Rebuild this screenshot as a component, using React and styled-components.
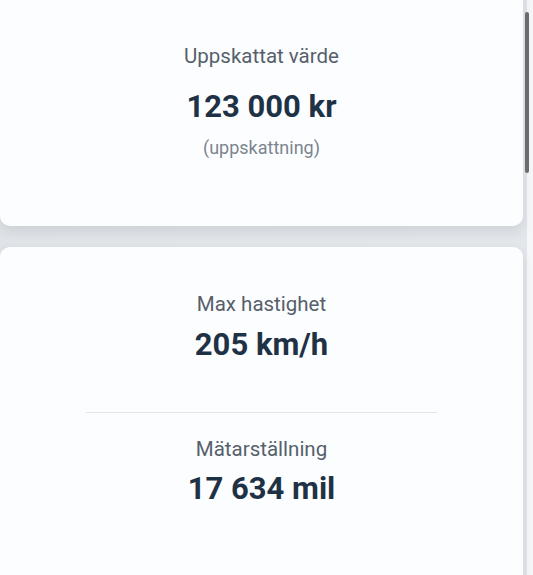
import React from "react";
import styled, { createGlobalStyle } from "styled-components";

const Global = createGlobalStyle`
  html, body { margin: 0; padding: 0; background: #f6f7f9; }
  body { font-family: Roboto, "Noto Sans", "Liberation Sans", sans-serif; overflow: hidden; }
`;

const Page = styled.div`
  position: relative;
  width: 533px;
  height: 575px;
  overflow: hidden;
  background: #f6f7f9;
`;

const Stack = styled.div`
  display: flex;
  flex-direction: column;
  gap: 21px;
  width: 527px;
  padding-right: 4px;
  box-sizing: border-box;
  margin-top: -14px;
  background: linear-gradient(to right, #e0e3e7 0%, #e3e6ea 100%);
`;

const Card = styled.section`
  background: #fcfdfe;
  border-radius: 10px;
  box-shadow: 0 5px 12px rgba(60, 70, 90, 0.12);
  display: flex;
  flex-direction: column;
  align-items: center;
  padding: ${(p) => p.$pad};
`;

const Label = styled.div`
  font-size: 20.5px;
  line-height: 24px;
  color: #56606b;
`;

const Value = styled.div`
  font-size: 31px;
  line-height: 34px;
  font-weight: 700;
  color: #1f3245;
  margin-top: ${(p) => p.$gap}px;
`;

const Note = styled.div`
  font-size: 18px;
  line-height: 20px;
  color: #7b858f;
  margin-top: 14px;
`;

const Divider = styled.hr`
  align-self: stretch;
  margin: 50px 86px 24px;
  border: none;
  height: 1px;
  background: #e2e5e9;
`;

const Scrollbar = styled.div`
  position: absolute;
  top: 12px;
  left: 525px;
  width: 4px;
  height: 161px;
  border-radius: 2px;
  background: #6c6c6e;
`;

export default function App() {
  return (
    <Page>
      <Global />
      <Stack>
        <Card $pad="58px 0 68px">
          <Label>Uppskattat värde</Label>
          <Value $gap={22}>123 000 kr</Value>
          <Note>(uppskattning)</Note>
        </Card>
        <Card $pad="45px 0 80px">
          <Label>Max hastighet</Label>
          <Value $gap={12}>205 km/h</Value>
          <Divider />
          <Label>Mätarställning</Label>
          <Value $gap={11}>17 634 mil</Value>
        </Card>
      </Stack>
      <Scrollbar />
    </Page>
  );
}
